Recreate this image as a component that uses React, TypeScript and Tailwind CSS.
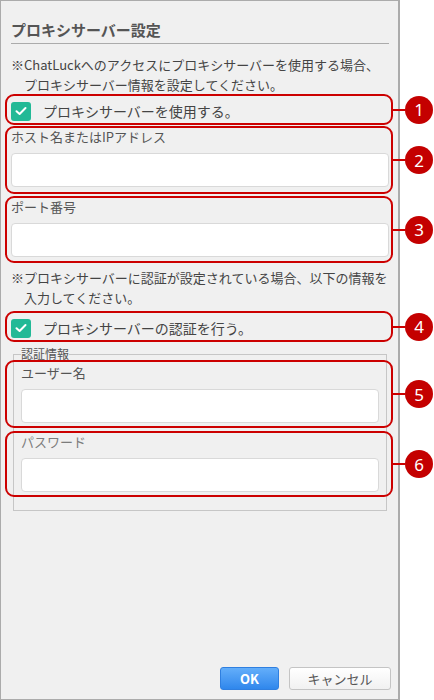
import type { ReactNode } from 'react';

// red annotation frame + numbered badge, drawn over a section
function Mark({ n, className }: { n: number; className: string }) {
  return (
    <div className={`pointer-events-none absolute rounded-[9px] border-2 border-[#cc0000] ${className}`}>
      <div className="absolute left-[calc(100%+2px)] top-1/2 flex -translate-y-1/2 items-center">
        <div className="h-[2px] w-[12px] bg-[#cc0000]" />
        <div className="flex h-[28px] w-[28px] items-center justify-center rounded-full bg-[#c40000] font-['Noto_Sans',sans-serif] text-[17px] leading-none text-white">
          {n}
        </div>
      </div>
    </div>
  );
}

function Check({ label }: { label: string }) {
  return (
    <div className="flex h-[31px] items-center gap-[12px] pt-[3px]">
      <span className="flex h-[19px] w-[20px] items-center justify-center rounded-[3px] bg-[#22b996]">
        <svg width="12" height="10" viewBox="0 0 12 10" fill="none">
          <path d="M1.5 5.2 4.6 8 10.5 2" stroke="#fff" strokeWidth="2" strokeLinecap="round" strokeLinejoin="round" />
        </svg>
      </span>
      <span className="text-[14px] leading-5 text-[#444]">{label}</span>
    </div>
  );
}

function Field({ label, muted }: { label: string; muted?: boolean }) {
  return (
    <>
      <div className={`h-5 text-[13px] leading-5 ${muted ? 'text-[#7c7c7c]' : 'text-[#555]'}`}>{label}</div>
      <div className="mt-[6px] h-[34px] rounded-[4px] border border-[#d9d9d9] bg-white" />
    </>
  );
}

function Note({ children }: { children: ReactNode }) {
  return (
    <div className="flex text-[13px] leading-[19.5px] text-[#444]">
      <span className="w-[13px] shrink-0">※</span>
      <div>{children}</div>
    </div>
  );
}

export default function App() {
  return (
    <div className="h-[700px] w-[434px] bg-white font-['Noto_Sans_CJK_JP','Noto_Sans',sans-serif]">
      <div className="flex h-[700px] w-[400px] flex-col border border-r-2 border-[#ababab] bg-[#f0f0f0] pl-[10px] pr-[9px] pt-[19px] pb-[9px]">
        <div className="border-b border-[#ababab] pb-[3px] text-[15px] font-bold leading-5 text-[#555]">
          プロキシサーバー設定
        </div>

        <div className="mt-[11px]">
          <Note>
            ChatLuckへのアクセスにプロキシサーバーを使用する場合、
            <br />
            プロキシサーバー情報を設定してください。
          </Note>
        </div>

        <div className="relative">
          <Check label="プロキシサーバーを使用する。" />
          <Mark n={1} className="-left-[6px] -right-[4px] top-0 bottom-0" />
        </div>

        <div className="relative mt-[2px]">
          <Field label="ホスト名またはIPアドレス" />
          <Mark n={2} className="-left-[6px] -right-[4px] -top-px -bottom-[7px]" />
        </div>

        <div className="relative mt-[10px]">
          <Field label="ポート番号" />
          <Mark n={3} className="-left-[6px] -right-[4px] -top-px -bottom-[6px]" />
        </div>

        <div className="mt-[11px]">
          <Note>
            プロキシサーバーに認証が設定されている場合、以下の情報を
            <br />
            入力してください。
          </Note>
        </div>

        <div className="relative mt-[4px]">
          <Check label="プロキシサーバーの認証を行う。" />
          <Mark n={4} className="-left-[6px] -right-[4px] top-0 bottom-0" />
        </div>

        <fieldset className="mx-[2px] mt-[5px] border border-[#c6c6c6] px-[7px] pb-[18px] pt-[2px]">
          <legend className="px-0 text-[12px] leading-[14px] text-[#555]">認証情報</legend>
          <div className="relative">
            <Field label="ユーザー名" />
            <Mark n={5} className="-left-[16px] -right-[14px] -top-[3px] -bottom-[5px]" />
          </div>
          <div className="relative mt-[9px]">
            <Field label="パスワード" muted />
            <Mark n={6} className="-left-[16px] -right-[14px] -top-px -bottom-[5px]" />
          </div>
        </fieldset>

        <div className="mt-auto mr-[-2px] flex justify-end gap-[10px]">
          <button className="h-[23px] w-[59px] rounded-[3px] border border-[#2f7fe0] bg-gradient-to-b from-[#63aefa] to-[#2f87ec] text-[13px] font-bold leading-none text-white">
            OK
          </button>
          <button className="h-[23px] w-[102px] rounded-[3px] border border-[#c4c4c4] bg-gradient-to-b from-white to-[#f1f1f1] text-[13px] leading-none text-[#555]">
            キャンセル
          </button>
        </div>
      </div>
    </div>
  );
}
